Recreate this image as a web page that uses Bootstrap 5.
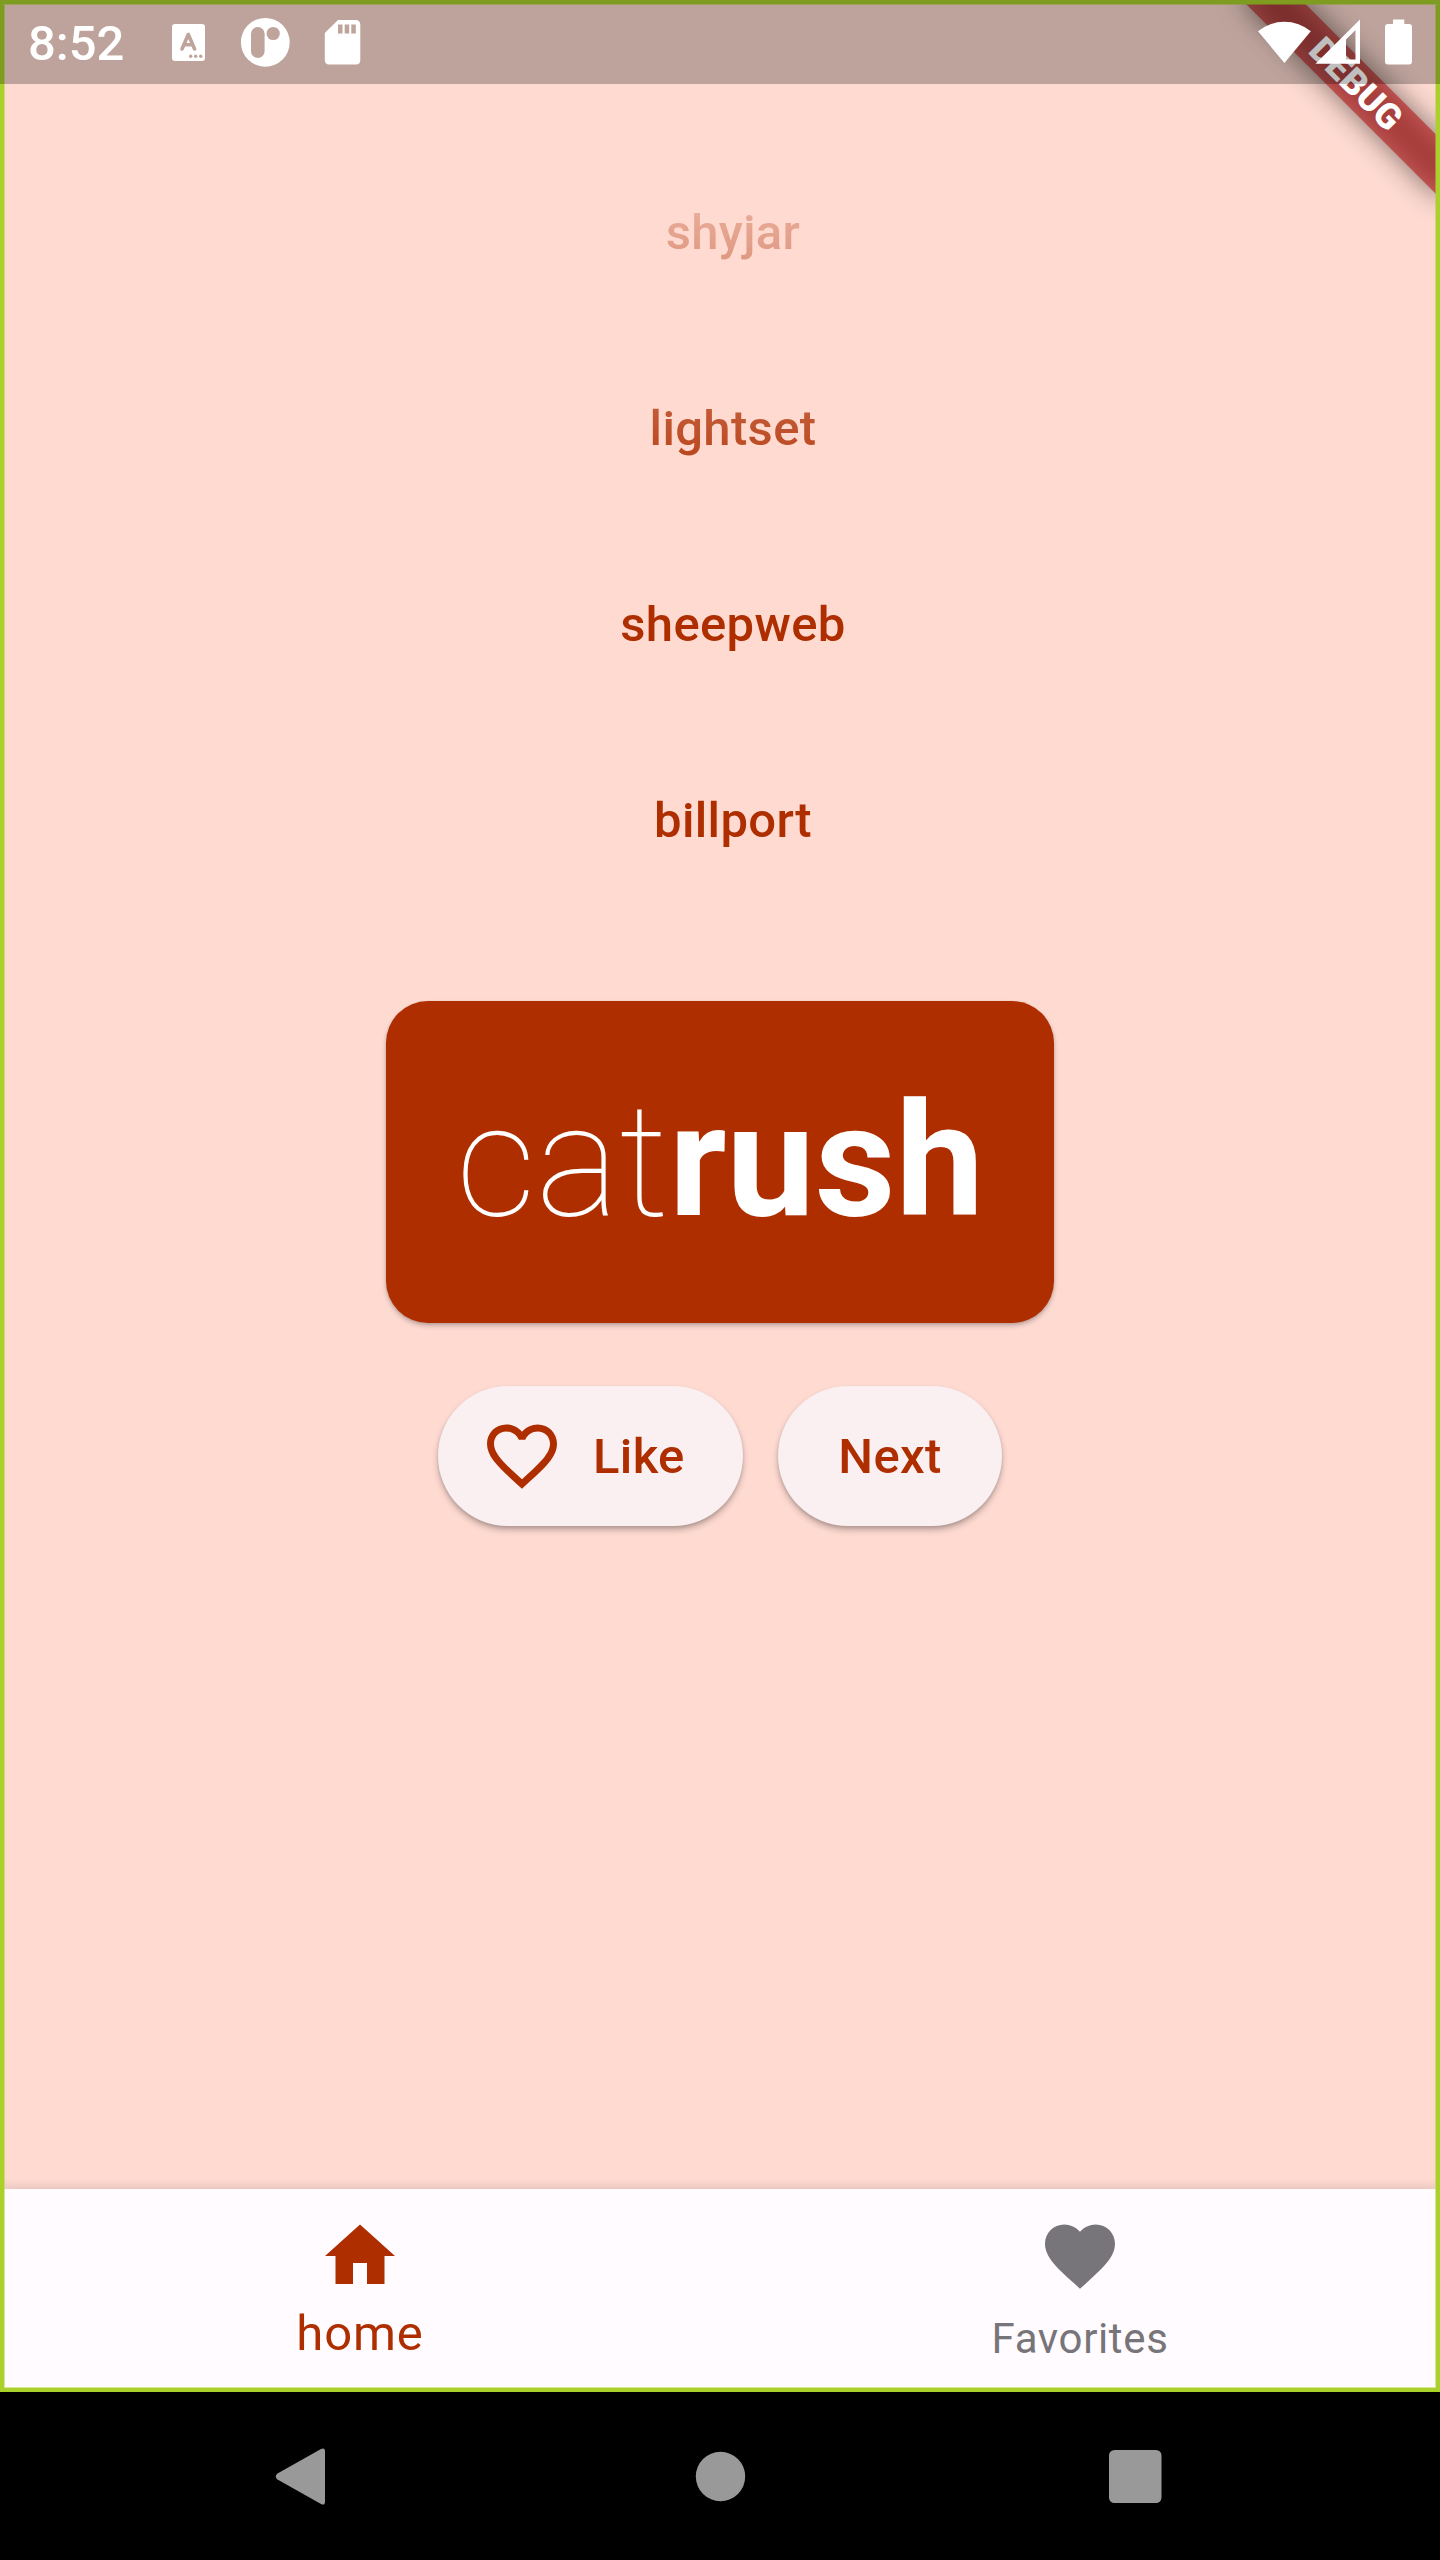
<!DOCTYPE html>
<html lang="en">
<head>
<meta charset="utf-8">
<meta name="viewport" content="width=device-width, initial-scale=1">
<title>Name generator</title>
<link href="https://cdn.jsdelivr.net/npm/bootstrap@5.3.0/dist/css/bootstrap.min.css" rel="stylesheet">
<style>
  :root { --rust: #ae2e00; --blush: #fedad1; --paper: #fffbff; --lime: #a9d12a; }
  body { font-family: Roboto, sans-serif; width: 1440px; height: 2560px; background: #000; overflow: hidden; }
  svg { display: block; flex: none; }
  .app-screen { height: 2392px; background: var(--blush); }
  .app-frame { border: 4px solid var(--lime); z-index: 3; pointer-events: none; box-shadow: inset 0 0 0 1px rgba(169,209,42,.5); }
  .status-bar { height: 84px; z-index: 4; background: rgba(0,0,0,.25); padding: 0 28px 0 28px; }
  .clock { font-size: 49px; font-weight: 500; line-height: 84px; padding-top: 4px; width: 144px; }
  .status-right { width: 154px; }
  .corner { width: 240px; height: 240px; z-index: 2; }
  .ribbon { left: 100px; top: 98px; width: 280px; height: 42px; transform-origin: 140px -98px; transform: rotate(45deg); }
  .ribbon::before, .ribbon::after { content: ""; position: absolute; inset: 0; }
  .ribbon::before { background: rgba(0,0,0,.5); filter: blur(13.9px); }
  .ribbon::after { background: rgba(183,28,28,.627); }
  .ribbon span { z-index: 1; font-size: 35.7px; font-weight: 900; line-height: 42px; }
  .page-body { padding-top: 84px; }
  .history { height: 868px; padding: 51px 0 33px 26px;
    -webkit-mask-image: linear-gradient(#0000 16px, #000 50%); mask-image: linear-gradient(#0000 16px, #000 50%); }
  .history-word { height: 196px; color: var(--rust); font-size: 49px; font-weight: 500; letter-spacing: .35px; }
  .word-card { margin-top: 49px; width: 668.6px; height: 322px; border: 0; border-radius: 42px; background: var(--rust); color: #fff;
    box-shadow: 0 3px 5px rgba(0,0,0,.2), 0 1px 3px rgba(0,0,0,.12); }
  .word-pair { font-size: 157.5px; line-height: 182px; padding-bottom: 2px; }
  .thin { font-weight: 100; }
  .heavy { font-weight: 700; }
  .actions { margin-top: 63px; gap: 35px; }
  .pill { height: 140px; border: 0; border-radius: 70px; background: #faeff1; color: var(--rust); font-size: 49px; font-weight: 500;
    line-height: 70px; letter-spacing: .35px; padding: 0 56px; box-shadow: 0 4px 6px rgba(0,0,0,.24), 0 2px 3px rgba(0,0,0,.1); }
  .pill span { padding-top: 2px; }
  .pill-like { width: 305px; padding-left: 42px; gap: 29px; }
  .pill-next { width: 224px; }
  .bottom-tabs { height: 203px; background: var(--paper); box-shadow: 0 -2px 10px rgba(0,0,0,.12); }
  .tab { padding-top: 25px; color: #777579; font-size: 42px; letter-spacing: .65px; line-height: 58px; }
  .tab.current { color: var(--rust); font-size: 49px; letter-spacing: .9px; }
  .tab span { margin-top: 12px; }
  .tab.current span { margin-top: 7px; }
  .system-keys { height: 168px; padding: 0 262px; }
</style>
</head>
<body>
<main class="app-screen position-relative d-flex flex-column overflow-hidden">
  <header class="status-bar position-absolute top-0 start-0 w-100 d-flex align-items-center justify-content-between text-white">
    <div class="d-flex align-items-center">
      <div class="clock">8:52</div>
      <svg width="192" height="84" viewBox="172 0 192 84" fill="#fff">
        <path fill-rule="evenodd" d="M175 24h27a3 3 0 0 1 3 3v31a3 3 0 0 1-3 3h-27a3 3 0 0 1-3-3V27a3 3 0 0 1 3-3z"/>
        <path d="M182 49l6.300-14.500L194.600 49M184.500 44.800h7.500" fill="none" stroke="#bfa49c" stroke-width="3.600" stroke-linecap="round" stroke-linejoin="round"/>
        <g fill="#bfa49c"><circle cx="190.700" cy="56.300" r="1.700"/><circle cx="195.700" cy="56.300" r="1.700"/><circle cx="200.700" cy="56.300" r="1.700"/></g>
        <circle cx="265.300" cy="42.300" r="24.400"/>
        <rect x="251" y="27" width="13.600" height="31" rx="6.800" fill="#bfa49c"/><circle cx="273.200" cy="33.500" r="6.600" fill="#bfa49c"/>
        <path d="M338 20h18a4.300 4.300 0 0 1 4.300 4.300v36a4.300 4.300 0 0 1-4.300 4.200h-27a4.300 4.300 0 0 1-4.200-4.200V33z"/>
        <path d="M338 24.600h4.500v9H338zM344.700 24.600h4.500v9h-4.500zM351.300 24.600h4.500v9h-4.500z" fill="#bfa49c"/>
      </svg>
    </div>
    <svg class="status-right" width="154" height="84" viewBox="1258 0 154 84" fill="#fff">
      <path d="M1284.400 63L1258 31.200A41.500 41.500 0 0 1 1310.800 31.200z"/>
      <path fill-rule="evenodd" d="M1315.500 63.700L1360 19.500V63.700zM1346 39.500V59.500H1355.500V30z"/>
      <path d="M1393 19.500h11.300v4.500h4.700a3 3 0 0 1 3 3v34.500a3 3 0 0 1-3 3h-21a3 3 0 0 1-3-3V27a3 3 0 0 1 3-3h5z"/>
    </svg>
  </header>

  <div class="page-body flex-grow-1 d-flex flex-column align-items-center">
    <div class="history w-100">
      <div class="history-word d-flex align-items-center justify-content-center">shyjar</div>
      <div class="history-word d-flex align-items-center justify-content-center">lightset</div>
      <div class="history-word d-flex align-items-center justify-content-center">sheepweb</div>
      <div class="history-word d-flex align-items-center justify-content-center">billport</div>
    </div>
    <div class="word-card card align-items-center justify-content-center">
      <div class="word-pair text-nowrap"><span class="thin">cat</span><span class="heavy">rush</span></div>
    </div>
    <div class="actions d-flex">
      <button type="button" class="pill pill-like btn d-flex align-items-center">
        <svg width="84" height="84" viewBox="0 0 24 24" fill="currentColor"><path d="M16.500 3c-1.740 0-3.410.81-4.500 2.090C10.910 3.810 9.240 3 7.500 3 4.420 3 2 5.420 2 8.500c0 3.780 3.400 6.860 8.550 11.540L12 21.350l1.450-1.320C18.600 15.360 22 12.280 22 8.500 22 5.420 19.580 3 16.500 3zm-4.400 15.550l-.1.100-.1-.1C7.140 14.240 4 11.390 4 8.500 4 6.500 5.500 5 7.500 5c1.540 0 3.040.99 3.570 2.360h1.870C13.460 5.990 14.960 5 16.500 5c2 0 3.500 1.500 3.500 3.500 0 2.890-3.140 5.740-7.900 10.050z"/></svg>
        <span>Like</span>
      </button>
      <button type="button" class="pill pill-next btn d-flex align-items-center justify-content-center"><span>Next</span></button>
    </div>
  </div>

  <nav class="bottom-tabs d-flex">
    <div class="tab current w-50 d-flex flex-column align-items-center">
      <svg width="84" height="84" viewBox="0 0 24 24" fill="currentColor"><path d="M10 20v-6h4v6h5v-8h3L12 3 2 12h3v8z"/></svg>
      <span>home</span>
    </div>
    <div class="tab w-50 d-flex flex-column align-items-center">
      <svg width="84" height="84" viewBox="0 0 24 24" fill="currentColor"><path d="M12 21.350l-1.450-1.320C5.400 15.360 2 12.280 2 8.500 2 5.420 4.420 3 7.500 3c1.740 0 3.410.81 4.500 2.090C13.090 3.810 14.760 3 16.500 3 19.580 3 22 5.420 22 8.500c0 3.780-3.400 6.860-8.550 11.540L12 21.350z"/></svg>
      <span>Favorites</span>
    </div>
  </nav>

  <div class="corner position-absolute top-0 end-0">
    <div class="ribbon position-absolute text-white text-center"><span class="position-relative">DEBUG</span></div>
  </div>
  <div class="app-frame position-absolute top-0 start-0 w-100 h-100"></div>
</main>

<footer class="system-keys d-flex align-items-center justify-content-between">
  <svg width="77" height="77" viewBox="0 0 77 77" fill="#999"><path d="M15.500 35.500L59 11Q63 9 63 13.500V63.500Q63 68 59 66L15.500 41.500Q12 38.500 15.500 35.500z"/></svg>
  <svg width="77" height="77" viewBox="0 0 77 77" fill="#999"><circle cx="38.500" cy="38.500" r="24.700"/></svg>
  <svg width="77" height="77" viewBox="0 0 77 77" fill="#999"><rect x="8" y="12" width="52.500" height="53" rx="5.500"/></svg>
</footer>
<script src="https://cdn.jsdelivr.net/npm/bootstrap@5.3.0/dist/js/bootstrap.bundle.min.js"></script>
</body>
</html>
